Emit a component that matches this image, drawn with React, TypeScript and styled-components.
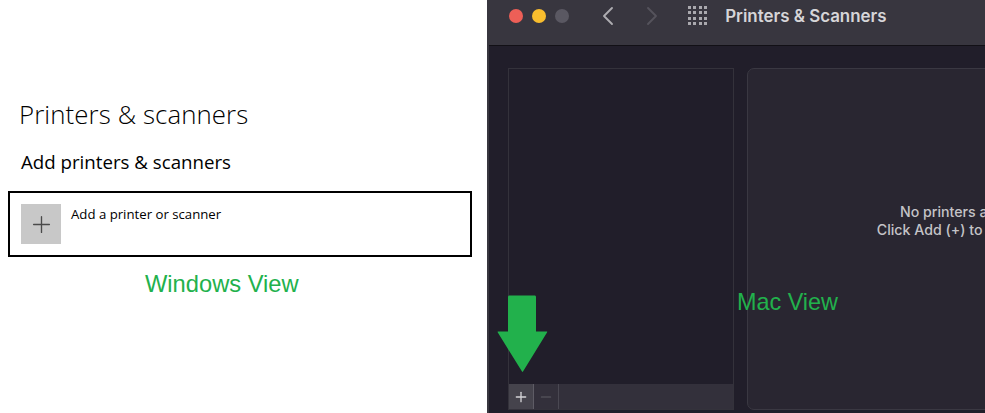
import React from 'react'
import styled, { createGlobalStyle } from 'styled-components'
import { ChevronLeft, ChevronRight, Plus, Minus } from 'lucide-react'

const GlobalStyle = createGlobalStyle`
  html, body {
    margin: 0;
    padding: 0;
    background: #fff;
  }
`

const Page = styled.div`
  position: relative;
  display: flex;
  width: 985px;
  height: 413px;
  overflow: hidden;
  font-family: 'Open Sans', 'Noto Sans', sans-serif;
`

/* Windows side */
const WindowsPane = styled.section`
  display: flex;
  flex-direction: column;
  width: 487px;
  flex: none;
  padding: 97px 15px 0 8px;
  box-sizing: border-box;
  background: #fff;
  color: #000;
`

const WinTitle = styled.h1`
  margin: 0 0 0 11px;
  font-size: 25.8px;
  line-height: 34px;
  font-weight: 300;
  letter-spacing: 0.1px;
`

const WinSubtitle = styled.h2`
  margin: 18px 0 0 13px;
  font-size: 18.7px;
  line-height: 26px;
  font-weight: 400;
`

const AddCard = styled.div`
  display: flex;
  gap: 10px;
  height: 66px;
  width: 464px;
  margin-top: 16px;
  padding: 11px 11px;
  box-sizing: border-box;
  border: 2px solid #000;
`

const AddTile = styled.div`
  display: flex;
  align-items: center;
  justify-content: center;
  width: 40px;
  height: 40px;
  background: #c8c8c8;
  color: #4a4a4a;
`

const AddLabel = styled.span`
  font-size: 13.2px;
  line-height: 18px;
  margin-top: 1px;
`

const WinCaption = styled.div`
  margin: 13px 0 0 137px;
  font-family: 'Liberation Sans', Arial, sans-serif;
  font-size: 23.7px;
  line-height: 29px;
  color: #22b14c;
`

/* Mac side */
const MacPane = styled.section`
  display: flex;
  flex-direction: column;
  flex: 1;
  min-width: 0;
  border-left: 2px solid #38363f;
  background: #211e2a;
  overflow: hidden;
  font-family: 'Inter', 'Liberation Sans', sans-serif;
`

const TitleBar = styled.header`
  display: flex;
  align-items: center;
  flex: none;
  height: 46px;
  padding: 0 0 14px 20px;
  box-sizing: border-box;
  background: #38363f;
  border-bottom: 1px solid #121016;
`

const Lights = styled.div`
  display: flex;
  gap: 9px;
`

const Light = styled.span<{ $color: string }>`
  width: 14px;
  height: 14px;
  border-radius: 50%;
  background: ${p => p.$color};
`

const NavGroup = styled.div`
  display: flex;
  align-items: center;
  gap: 12px;
  margin-left: 23px;
`

const AppGrid = styled.div`
  display: grid;
  grid-template-columns: repeat(4, 3px);
  gap: 2.4px;
  margin-left: 20px;

  span {
    width: 3px;
    height: 3px;
    background: #aaa9ae;
  }
`

const MacTitle = styled.div`
  margin-left: 18px;
  font-size: 16.9px;
  line-height: 20px;
  font-weight: 600;
  color: #d6d5d8;
  white-space: nowrap;
`

const MacBody = styled.div`
  display: flex;
  flex: 1;
  gap: 13px;
  min-height: 0;
  padding: 22px 0 3px 19px;
`

const ListPanel = styled.div`
  display: flex;
  flex-direction: column;
  justify-content: flex-end;
  width: 226px;
  flex: none;
  box-sizing: border-box;
  border: 1px solid #34323b;
`

const ListFooter = styled.div`
  display: flex;
  height: 25px;
  background: #33303b;
`

const FooterButton = styled.div<{ $active?: boolean }>`
  display: flex;
  align-items: center;
  justify-content: center;
  width: 25px;
  box-sizing: border-box;
  border-right: 1px solid ${p => (p.$active ? '#5e5c65' : '#4a4852')};
  background: ${p => (p.$active ? '#45434c' : 'transparent')};
  color: ${p => (p.$active ? '#d4d3d6' : '#5e5c65')};
`

const DetailPanel = styled.div`
  display: flex;
  align-items: center;
  justify-content: center;
  flex-direction: column;
  width: 475px;
  flex: none;
  padding-bottom: 36px;
  box-sizing: border-box;
  background: #292631;
  border: 1px solid #3a3842;
  border-radius: 7px;
  font-size: 14.2px;
  line-height: 18px;
  font-weight: 500;
  color: #c4c3c7;
  white-space: nowrap;
`

/* Annotations laid over the screenshot */
const MacCaption = styled.div`
  position: absolute;
  left: 737px;
  top: 288px;
  font-family: 'Liberation Sans', Arial, sans-serif;
  font-size: 23.4px;
  line-height: 29px;
  color: #22b14c;
`

const ArrowMark = styled.svg`
  position: absolute;
  left: 497px;
  top: 295px;
`

export default function App() {
  return (
    <>
      <GlobalStyle />
      <Page>
        <WindowsPane>
          <WinTitle>Printers &amp; scanners</WinTitle>
          <WinSubtitle>Add printers &amp; scanners</WinSubtitle>
          <AddCard>
            <AddTile>
              <Plus size={27} strokeWidth={1.2} />
            </AddTile>
            <AddLabel>Add a printer or scanner</AddLabel>
          </AddCard>
          <WinCaption>Windows View</WinCaption>
        </WindowsPane>
        <MacPane>
          <TitleBar>
            <Lights>
              <Light $color="#ed5f57" />
              <Light $color="#f8bd2e" />
              <Light $color="#5a5862" />
            </Lights>
            <NavGroup>
              <ChevronLeft size={32} strokeWidth={1.4} color="#aeadb1" />
              <ChevronRight size={32} strokeWidth={1.4} color="#55535c" />
            </NavGroup>
            <AppGrid>
              {Array.from({ length: 16 }, (_, i) => (
                <span key={i} />
              ))}
            </AppGrid>
            <MacTitle>Printers &amp; Scanners</MacTitle>
          </TitleBar>
          <MacBody>
            <ListPanel>
              <ListFooter>
                <FooterButton $active>
                  <Plus size={16} strokeWidth={2} />
                </FooterButton>
                <FooterButton>
                  <Minus size={16} strokeWidth={1.6} />
                </FooterButton>
              </ListFooter>
            </ListPanel>
            <DetailPanel>
              <div>No printers are available.</div>
              <div>Click Add (+) to set up a printer.</div>
            </DetailPanel>
          </MacBody>
        </MacPane>
        <MacCaption>Mac View</MacCaption>
        <ArrowMark width="51" height="78" viewBox="0 0 51 78">
          <path d="M12 0.5 H38 Q39 0.5 39 2 V36.5 H50 Q50.5 36.5 50 37.5 L26 76.5 Q25.5 77.3 25 76.5 L0.8 37.5 Q0.2 36.5 1 36.5 H11 V2 Q11 0.5 12 0.5 Z" fill="#22b14c" />
        </ArrowMark>
      </Page>
    </>
  )
}
